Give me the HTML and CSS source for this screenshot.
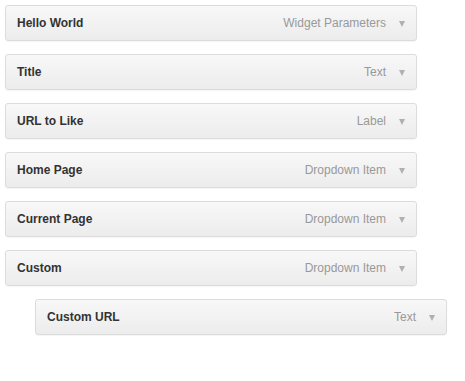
FILE: index.html
```html
<!DOCTYPE html>
<html>
<head>
<meta charset="utf-8">
<link rel="stylesheet" href="styles.css">
</head>
<body>
<div class="list">
  <div class="item"><span class="title">Hello World</span><span class="type">Widget Parameters</span><span class="caret"></span></div>
  <div class="item"><span class="title">Title</span><span class="type">Text</span><span class="caret"></span></div>
  <div class="item"><span class="title">URL to Like</span><span class="type">Label</span><span class="caret"></span></div>
  <div class="item"><span class="title">Home Page</span><span class="type">Dropdown Item</span><span class="caret"></span></div>
  <div class="item"><span class="title">Current Page</span><span class="type">Dropdown Item</span><span class="caret"></span></div>
  <div class="item"><span class="title">Custom</span><span class="type">Dropdown Item</span><span class="caret"></span></div>
  <div class="item nested"><span class="title">Custom URL</span><span class="type">Text</span><span class="caret"></span></div>
</div>
</body>
</html>
```

FILE: styles.css
```css
html, body {
  margin: 0;
  padding: 0;
  background: #fff;
}
body {
  padding: 5px;
  font-family: "Liberation Sans", Arial, sans-serif;
  font-size: 12px;
}
.list {
  display: flex;
  flex-direction: column;
  gap: 13px;
}
.item {
  box-sizing: border-box;
  width: 412px;
  height: 36px;
  border: 1px solid #dcdcdc;
  border-radius: 3px;
  background: linear-gradient(to bottom, #f8f8f8, #ececec);
  box-shadow: 0 1px 1px rgba(0,0,0,0.04);
  display: flex;
  align-items: center;
  padding: 0 11px 0 11px;
}
.nested {
  margin-left: 30px;
}
.title {
  font-weight: bold;
  color: #333;
  flex: 1;
}
.type {
  color: #999;
}
.caret {
  width: 0;
  height: 0;
  margin-left: 13px;
  border-left: 3.5px solid transparent;
  border-right: 3.5px solid transparent;
  border-top: 6px solid #b0b0b0;
  margin-top: 2px;
}
```
